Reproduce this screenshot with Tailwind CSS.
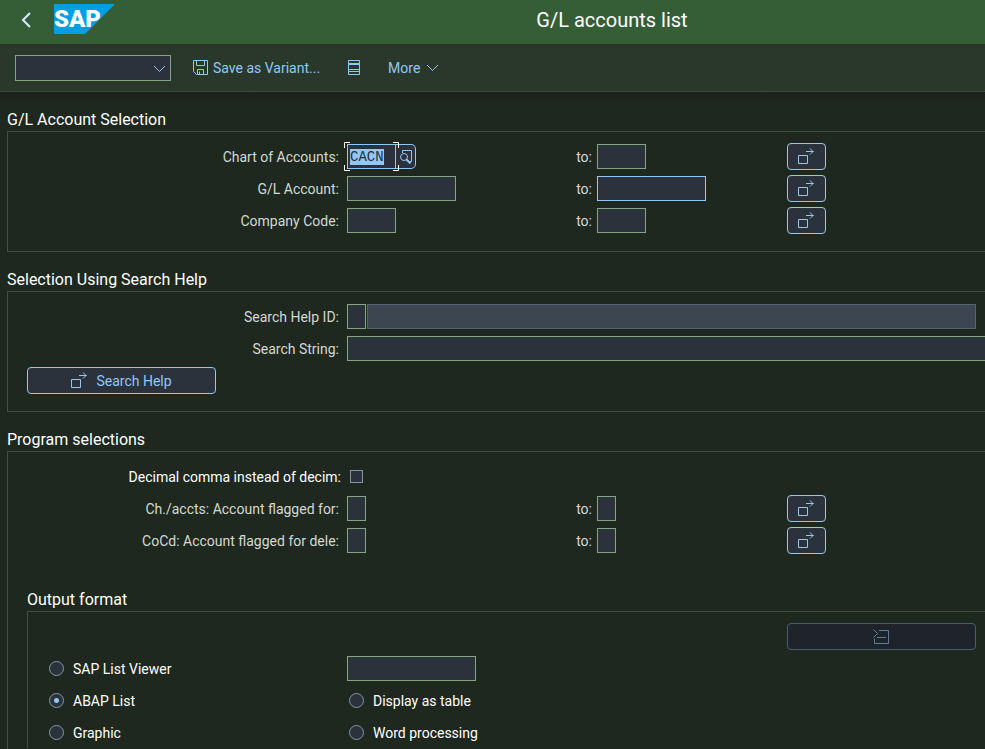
<!DOCTYPE html>
<html lang="en">
<head>
<meta charset="utf-8">
<meta name="viewport" content="width=device-width, initial-scale=1">
<title>G/L accounts list</title>
<script src="https://cdn.jsdelivr.net/npm/@tailwindcss/browser@4"></script>
</head>
<body class="bg-[#1e281e] font-[Roboto,'Liberation_Sans',sans-serif] text-[14px] leading-5 text-[#d3d9d3]">
<svg class="hidden" aria-hidden="true">
  <symbol id="multi" viewBox="0 0 17 17"><path d="M.5 7.500h9v8h-9zM8 3.500h7.500M12 .5l3 3l-3 3" fill="none" stroke="currentColor"/></symbol>
</svg>
<div class="flex h-screen flex-col overflow-hidden">
  <header class="grid h-11 shrink-0 grid-cols-[239px_1fr] items-center bg-[#355e37]">
    <div class="flex h-11 items-start">
      <button aria-label="Back" class="ml-5 mt-3 h-4 w-[34px] text-[#d9ecfb]"><svg class="h-4 w-3" viewBox="0 0 12 16" fill="none" stroke="currentColor" stroke-width="2"><path d="M10 1L3 8l7 7"/></svg></button>
      <svg class="mt-1 h-[30px] w-[61px]" viewBox="0 0 61 30" role="img" aria-label="SAP"><path d="M0 0h61L31 30H0z" fill="#009fe3"/><text x="0" y="23" font-family="Roboto" font-weight="900" font-size="24" fill="#fff">SAP</text></svg>
    </div>
    <h1 class="pb-1 text-center text-[20px] leading-7 text-white">G/L accounts list</h1>
  </header>

  <nav class="flex h-12 shrink-0 items-center border-b border-[#3b4f3c] bg-[#29382b] pl-[15px] text-[#91c8f6]">
    <div class="relative h-[26px] w-[156px]">
      <select aria-label="Command" class="block h-[26px] w-full appearance-none border border-[#85a582] bg-[#2b323c]"><option></option></select>
      <svg class="pointer-events-none absolute right-[5px] top-[10px] h-[8px] w-[13px]" viewBox="0 0 13 8" fill="none" stroke="currentColor"><path d="M1 1l5.500 5.500L12 1"/></svg>
    </div>
    <button class="ml-[22px] flex items-center gap-[5px]">
      <svg class="h-[15px] w-[15px]" viewBox="0 0 15 15" fill="none" stroke="currentColor"><path d="M.5.5h14v14H3.500L.5 11.500zM3.500.5v5h8v-5M4.500 14.500v-5h6v5M6.500 14.500v-3"/></svg>
      Save as Variant...</button>
    <button aria-label="List" class="ml-7"><svg class="h-[15px] w-3" viewBox="0 0 12 15" fill="none" stroke="currentColor"><path d="M.5.5h11v14H.5zM.5 9.500h11M.5 11.500h11"/><path d="M0 4h12" stroke-width="2"/></svg></button>
    <button class="ml-7 flex items-center gap-[6px]">More <svg class="h-[8px] w-[13px]" viewBox="0 0 13 8" fill="none" stroke="currentColor"><path d="M1 1l5.500 5.500L12 1"/></svg></button>
  </nav>

  <main class="flex flex-1 flex-col bg-linear-to-b from-[#1b211b] to-[#1e281e] to-[12px] pl-[7px]">
    <section>
      <h2 class="h-[39px] pt-[18px] text-[16px] text-white">G/L Account Selection</h2>
      <div class="grid auto-rows-[31px] grid-cols-[339px_214px_36px_190px_1fr] items-center gap-y-px border-y border-l border-[#3b533c] pt-[9px] pb-[15px]">
        <label for="coa" class="pr-2 text-right">Chart of Accounts:</label>
        <div class="relative flex">
          <input id="coa" value="CACN" class="h-[25px] w-[49px] border border-[#91c8f6] bg-[#2b323c] px-[2px] font-['Liberation_Mono',monospace] text-[14px] leading-4 text-[#91c8f6] outline-none selection:bg-[#91c8f6] selection:text-[#29313a]">
          <button aria-label="Value help" class="flex h-[25px] w-5 items-center justify-center rounded-r-[5px] border border-l-0 border-[#91c8f6] bg-[#2b323c] text-[#91c8f6]"><svg class="h-[14px] w-[13px]" viewBox="0 0 13 14" fill="none" stroke="currentColor"><path d="M3.500 3V.5h9v11h-2"/><circle cx="5" cy="7" r="3.500"/><path d="M7.500 9.500l4 4" stroke-width="2"/></svg></button>
          <svg class="pointer-events-none absolute -left-[3px] -top-[2px] h-[29px] w-[55px]" viewBox="0 0 55 29" fill="none" stroke="#fff"><path d="M6 .5H.5V6M49 .5h5.500V6M.5 23v5.500H6M54.500 23v5.500H49"/></svg>
        </div>
        <label for="coa2" class="pr-[5px] text-right">to:</label>
        <input id="coa2" class="h-[25px] w-[49px] border border-[#85a582] bg-[#2b323c]">
        <button aria-label="Multiple selection" class="flex h-[27px] w-[39px] items-center justify-center rounded-[4px] border border-[#91c8f6] bg-[#2b323c] text-[#91c8f6]"><svg class="h-[17px] w-[17px]"><use href="#multi"/></svg></button>

        <label for="gla" class="pr-2 text-right">G/L Account:</label>
        <input id="gla" class="h-[25px] w-[109px] border border-[#85a582] bg-[#2b323c]">
        <label for="gla2" class="pr-[5px] text-right">to:</label>
        <input id="gla2" class="h-[25px] w-[109px] border border-[#91c8f6] bg-[#2b323c]">
        <button aria-label="Multiple selection" class="flex h-[27px] w-[39px] items-center justify-center rounded-[4px] border border-[#91c8f6] bg-[#2b323c] text-[#91c8f6]"><svg class="h-[17px] w-[17px]"><use href="#multi"/></svg></button>

        <label for="cc" class="pr-2 text-right">Company Code:</label>
        <input id="cc" class="h-[25px] w-[49px] border border-[#85a582] bg-[#2b323c]">
        <label for="cc2" class="pr-[5px] text-right">to:</label>
        <input id="cc2" class="h-[25px] w-[49px] border border-[#85a582] bg-[#2b323c]">
        <button aria-label="Multiple selection" class="flex h-[27px] w-[39px] items-center justify-center rounded-[4px] border border-[#91c8f6] bg-[#2b323c] text-[#91c8f6]"><svg class="h-[17px] w-[17px]"><use href="#multi"/></svg></button>
      </div>
    </section>

    <section>
      <h2 class="h-[39px] pt-[18px] text-[16px] text-white">Selection Using Search Help</h2>
      <div class="grid auto-rows-[31px] grid-cols-[339px_1fr] items-center gap-y-px border-y border-l border-[#3b533c] pt-[9px] pb-[15px]">
        <label for="shid" class="pr-2 text-right">Search Help ID:</label>
        <div class="flex gap-px pr-[9px]">
          <input id="shid" class="h-[25px] w-[19px] border border-[#85a582] bg-[#2b323c]">
          <input readonly aria-label="Search help description" class="h-[25px] min-w-0 flex-1 border border-[#536373] bg-[#3b4651]">
        </div>
        <label for="sstr" class="pr-2 text-right">Search String:</label>
        <input id="sstr" class="h-[25px] w-full border border-r-0 border-[#85a582] bg-[#2b323c]">
        <button class="ml-[19px] flex h-[27px] w-[189px] items-center justify-center gap-2 rounded-[4px] border border-[#91c8f6] bg-[#2b323c] text-[#91c8f6]"><svg class="h-[17px] w-[17px]"><use href="#multi"/></svg>Search Help</button>
      </div>
    </section>

    <section class="flex flex-1 flex-col">
      <h2 class="h-[39px] pt-[18px] text-[16px] text-white">Program selections</h2>
      <div class="flex-1 border-t border-l border-[#3b533c] pt-[9px]">
        <div class="grid auto-rows-[31px] grid-cols-[339px_214px_36px_190px_1fr] items-center gap-y-px">
          <label for="dec" class="pr-[6px] text-right text-white">Decimal comma instead of decim:</label>
          <input id="dec" type="checkbox" class="col-span-4 ml-[3px] h-[13px] w-[13px] appearance-none border border-[#8396a8] bg-[#2b323c]">

          <label for="cha" class="pr-2 text-right">Ch./accts: Account flagged for:</label>
          <input id="cha" class="h-[25px] w-[19px] border border-[#85a582] bg-[#2b323c]">
          <label for="cha2" class="pr-[5px] text-right">to:</label>
          <input id="cha2" class="h-[25px] w-[19px] border border-[#85a582] bg-[#2b323c]">
          <button aria-label="Multiple selection" class="flex h-[27px] w-[39px] items-center justify-center rounded-[4px] border border-[#91c8f6] bg-[#2b323c] text-[#91c8f6]"><svg class="h-[17px] w-[17px]"><use href="#multi"/></svg></button>

          <label for="ccd" class="pr-2 text-right">CoCd: Account flagged for dele:</label>
          <input id="ccd" class="h-[25px] w-[19px] border border-[#85a582] bg-[#2b323c]">
          <label for="ccd2" class="pr-[5px] text-right">to:</label>
          <input id="ccd2" class="h-[25px] w-[19px] border border-[#85a582] bg-[#2b323c]">
          <button aria-label="Multiple selection" class="flex h-[27px] w-[39px] items-center justify-center rounded-[4px] border border-[#91c8f6] bg-[#2b323c] text-[#91c8f6]"><svg class="h-[17px] w-[17px]"><use href="#multi"/></svg></button>
        </div>
        <section class="mt-4 ml-[19px] text-white">
          <h3 class="h-[39px] pt-[18px] text-[16px]">Output format</h3>
          <div class="grid auto-rows-[31px] grid-cols-[319px_440px_1fr] items-center gap-y-px border-t border-l border-[#3b533c] pt-[9px]">
            <button disabled aria-label="Expand output options" class="col-start-3 mr-[9px] flex h-[27px] items-center justify-center rounded-[4px] border border-[#465e73] bg-[#1f232a] text-[#5d7d9b]"><svg class="h-[15px] w-[17px]" viewBox="0 0 17 15" fill="none" stroke="currentColor"><path d="M6 1.500h9.500v13h-14V9.500M4 8.500h9M.5.5l4 4-4 4"/></svg></button>

            <label class="flex items-center gap-[9px] pl-[21px]"><input type="radio" name="fmt" class="h-[15px] w-[15px] appearance-none rounded-full border border-[#8396b0] bg-[#2b323c] checked:bg-[radial-gradient(circle,#91c8f6_2px,#2b323c_3px)]">SAP List Viewer</label>
            <input aria-label="List viewer variant" class="col-span-2 h-[25px] w-[129px] border border-[#85a582] bg-[#2b323c]">

            <label class="flex items-center gap-[9px] pl-[21px]"><input type="radio" name="fmt" checked class="h-[15px] w-[15px] appearance-none rounded-full border border-[#8396b0] bg-[#2b323c] checked:bg-[radial-gradient(circle,#91c8f6_2px,#2b323c_3px)]">ABAP List</label>
            <label class="col-span-2 flex items-center gap-[9px] pl-[2px]"><input type="radio" name="fmt" class="h-[15px] w-[15px] appearance-none rounded-full border border-[#8396b0] bg-[#2b323c] checked:bg-[radial-gradient(circle,#91c8f6_2px,#2b323c_3px)]">Display as table</label>

            <label class="flex items-center gap-[9px] pl-[21px]"><input type="radio" name="fmt" class="h-[15px] w-[15px] appearance-none rounded-full border border-[#8396b0] bg-[#2b323c] checked:bg-[radial-gradient(circle,#91c8f6_2px,#2b323c_3px)]">Graphic</label>
            <label class="col-span-2 flex items-center gap-[9px] pl-[2px]"><input type="radio" name="fmt" class="h-[15px] w-[15px] appearance-none rounded-full border border-[#8396b0] bg-[#2b323c] checked:bg-[radial-gradient(circle,#91c8f6_2px,#2b323c_3px)]">Word processing</label>
          </div>
        </section>
      </div>
    </section>
  </main>
</div>
<script>
  const field = document.getElementById('coa');
  field.focus();
  field.select();
</script>
</body>
</html>
